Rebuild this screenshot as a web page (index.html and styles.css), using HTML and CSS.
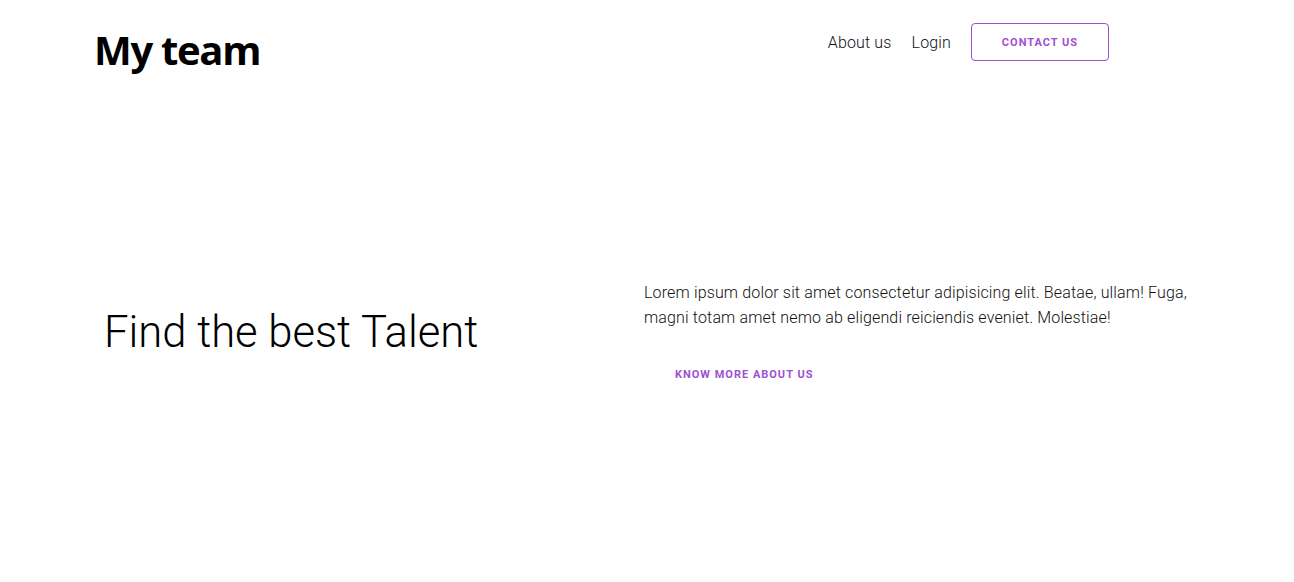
FILE: index.html
```html
<!DOCTYPE html>
<html lang="en">
<head>
<meta charset="utf-8">
<title>My team</title>
<link rel="stylesheet" href="styles.css">
</head>
<body>
<header class="header">
  <div class="logo">My team</div>
  <nav class="nav">
    <a class="nav-link" href="#">About us</a>
    <a class="nav-link" href="#">Login</a>
    <a class="btn-outline" href="#">Contact us</a>
  </nav>
</header>
<main class="hero">
  <div class="hero-left">
    <h1 class="hero-title">Find the best Talent</h1>
  </div>
  <div class="hero-right">
    <p class="hero-text">Lorem ipsum dolor sit amet consectetur adipisicing elit. Beatae, ullam! Fuga, magni totam amet nemo ab eligendi reiciendis eveniet. Molestiae!</p>
    <a class="btn-text" href="#">Know more about us</a>
  </div>
</main>
</body>
</html>
```
FILE: styles.css
```css
* { box-sizing: border-box; }
html, body { margin: 0; padding: 0; background: #fff; }
body {
  font-family: Roboto, "Noto Sans", sans-serif;
  color: #000;
  width: 1294px;
  height: 582px;
  overflow: hidden;
}
.header {
  display: flex;
  align-items: flex-start;
  justify-content: space-between;
  padding: 23px 185px 0 94px;
  height: 61px;
}
.logo {
  font-family: "Open Sans", "DejaVu Sans", sans-serif;
  font-weight: 700;
  font-size: 40px;
  line-height: 40px;
  letter-spacing: -1.3px;
  margin-top: 7px;
}
.nav {
  display: flex;
  align-items: center;
  gap: 20px;
}
.nav-link {
  font-weight: 300;
  font-size: 16px;
  letter-spacing: 0.15px;
  color: #111;
  text-decoration: none;
}
.btn-outline {
  display: flex;
  align-items: center;
  justify-content: center;
  width: 138px;
  height: 38px;
  border: 1px solid #9e4fd3;
  border-radius: 4px;
  color: #9e4fd3;
  font-size: 11px;
  font-weight: 700;
  letter-spacing: 1px;
  text-transform: uppercase;
  text-decoration: none;
}
.hero {
  display: flex;
  align-items: center;
  padding: 82px 90px 58px 104px;
  height: 521px;
}
.hero-left {
  width: 540px;
}
.hero-title {
  margin: 0;
  font-weight: 300;
  font-size: 43.6px;
  line-height: 1.2;
}
.hero-right {
  flex: 1;
  display: flex;
  flex-direction: column;
  align-items: flex-start;
}
.hero-text {
  margin: 0;
  font-weight: 300;
  font-size: 16px;
  line-height: 25px;
  letter-spacing: 0.15px;
  color: #111;
  max-width: 560px;
}
.btn-text {
  margin-top: 32px;
  padding: 6px 31px;
  color: #9e4fd3;
  font-size: 11px;
  font-weight: 700;
  letter-spacing: 1px;
  text-transform: uppercase;
  text-decoration: none;
}
```
